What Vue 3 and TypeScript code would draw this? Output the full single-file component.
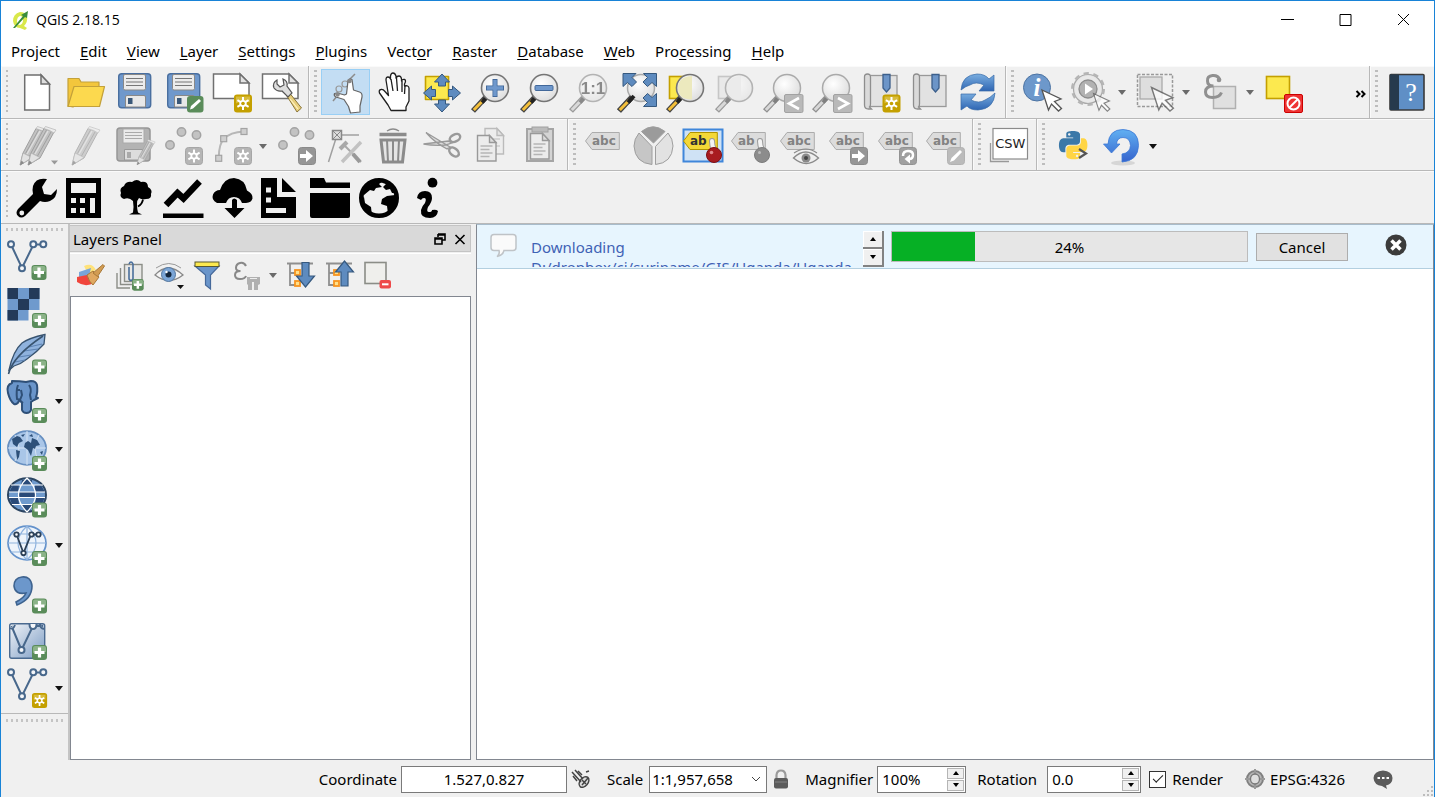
<script setup lang="ts">
import { ref } from 'vue'

interface Tool {
  icon: string
  label: string
  menu?: boolean
  active?: boolean
  dim?: boolean
}

interface Group {
  name: string
  tools: Tool[]
  overflow?: boolean
}

const menus: [string, string, string][] = [
  ['Pro', 'j', 'ect'],
  ['', 'E', 'dit'],
  ['', 'V', 'iew'],
  ['', 'L', 'ayer'],
  ['', 'S', 'ettings'],
  ['', 'P', 'lugins'],
  ['Vect', 'o', 'r'],
  ['', 'R', 'aster'],
  ['', 'D', 'atabase'],
  ['', 'W', 'eb'],
  ['Pro', 'c', 'essing'],
  ['', 'H', 'elp'],
]

const rows: Group[][] = [
  [
    {
      name: 'file',
      tools: [
        { icon: 'new', label: 'New project' },
        { icon: 'open', label: 'Open project' },
        { icon: 'save', label: 'Save project' },
        { icon: 'saveas', label: 'Save project as' },
        { icon: 'composer', label: 'New print composer' },
        { icon: 'manager', label: 'Composer manager' },
      ],
    },
    {
      name: 'nav',
      tools: [
        { icon: 'touch', label: 'Touch zoom and pan', active: true },
        { icon: 'pan', label: 'Pan map' },
        { icon: 'pansel', label: 'Pan map to selection' },
        { icon: 'zoomin', label: 'Zoom in' },
        { icon: 'zoomout', label: 'Zoom out' },
        { icon: 'zoomnative', label: 'Zoom to native resolution', dim: true },
        { icon: 'zoomfull', label: 'Zoom full' },
        { icon: 'zoomsel', label: 'Zoom to selection' },
        { icon: 'zoomsel', label: 'Zoom to layer', dim: true },
        { icon: 'zoomlast', label: 'Zoom last' },
        { icon: 'zoomnext', label: 'Zoom next' },
        { icon: 'newbookmark', label: 'New bookmark' },
        { icon: 'bookmark', label: 'Show bookmarks' },
        { icon: 'refresh', label: 'Refresh' },
      ],
    },
    {
      name: 'attributes',
      overflow: true,
      tools: [
        { icon: 'identify', label: 'Identify features' },
        { icon: 'action', label: 'Run feature action', menu: true },
        { icon: 'select', label: 'Select features', menu: true },
        { icon: 'selectexpr', label: 'Select by expression', menu: true },
        { icon: 'deselect', label: 'Deselect features' },
      ],
    },
    { name: 'help', tools: [{ icon: 'help', label: 'Help contents' }] },
  ],
  [
    {
      name: 'edit',
      tools: [
        { icon: 'pencils', label: 'Current edits' },
        { icon: 'pencil', label: 'Toggle editing' },
        { icon: 'saveedits', label: 'Save layer edits' },
        { icon: 'addpoint', label: 'Add feature' },
        { icon: 'addcurve', label: 'Add circular string', menu: true },
        { icon: 'movefeature', label: 'Move feature' },
        { icon: 'nodetool', label: 'Node tool' },
        { icon: 'trash', label: 'Delete selected' },
        { icon: 'cut', label: 'Cut features' },
        { icon: 'copy', label: 'Copy features' },
        { icon: 'paste', label: 'Paste features' },
      ],
    },
    {
      name: 'labels',
      tools: [
        { icon: 'label', label: 'Layer labeling options' },
        { icon: 'pie', label: 'Layer diagram options' },
        { icon: 'pinon', label: 'Highlight pinned labels' },
        { icon: 'pin', label: 'Pin or unpin labels' },
        { icon: 'labeleye', label: 'Show or hide labels' },
        { icon: 'labelmove', label: 'Move label' },
        { icon: 'labelrotate', label: 'Rotate label' },
        { icon: 'labeledit', label: 'Change label' },
      ],
    },
    { name: 'web', tools: [{ icon: 'csw', label: 'Metadata search' }] },
    {
      name: 'plugins',
      tools: [
        { icon: 'python', label: 'Python console' },
        { icon: 'reload', label: 'Reload plugin', menu: true },
      ],
    },
  ],
  [
    {
      name: 'extra',
      tools: [
        { icon: 'wrench', label: 'Settings' },
        { icon: 'calculator', label: 'Calculator' },
        { icon: 'tree', label: 'Land cover' },
        { icon: 'chart', label: 'Plot data' },
        { icon: 'cloud', label: 'Download data' },
        { icon: 'report', label: 'Reporting' },
        { icon: 'folder', label: 'Load data' },
        { icon: 'globe', label: 'Visualize' },
        { icon: 'info', label: 'About' },
      ],
    },
  ],
]

const layerTools: Tool[] = [
  { icon: 'addvector', label: 'Add vector layer' },
  { icon: 'addraster', label: 'Add raster layer' },
  { icon: 'addspatialite', label: 'Add SpatiaLite layer' },
  { icon: 'addpostgis', label: 'Add PostGIS layer', menu: true },
  { icon: 'addwms', label: 'Add WMS layer', menu: true },
  { icon: 'addwcs', label: 'Add WCS layer' },
  { icon: 'addwfs', label: 'Add WFS layer', menu: true },
  { icon: 'addtext', label: 'Add delimited text layer' },
  { icon: 'addvirtual', label: 'Add virtual layer' },
  { icon: 'newvector', label: 'New shapefile layer', menu: true },
]

const panelTools: Tool[] = [
  { icon: 'style', label: 'Open layer styling' },
  { icon: 'addgroup', label: 'Add group' },
  { icon: 'visibility', label: 'Manage visibility' },
  { icon: 'filter', label: 'Filter legend' },
  { icon: 'exprfilter', label: 'Filter by expression', menu: true },
  { icon: 'expand', label: 'Expand all' },
  { icon: 'collapse', label: 'Collapse all' },
  { icon: 'remove', label: 'Remove layer' },
]

const progress = ref(24)
const coordinate = ref('1.527,0.827')
const scale = ref('1:1,957,658')
const magnifier = ref('100%')
const rotation = ref('0.0')
const render = ref(true)
</script>

<template>
  <svg class="sprites" aria-hidden="true">
    <defs>
      <radialGradient id="lens" cx=".4" cy=".35" r=".7">
        <stop offset="0" stop-color="#fff" />
        <stop offset="1" stop-color="#dcdcdc" />
      </radialGradient>
      <linearGradient id="blue" x1="0" y1="0" x2="0" y2="1">
        <stop offset="0" stop-color="#7aaee0" />
        <stop offset="1" stop-color="#2f66b3" />
      </linearGradient>
      <linearGradient id="undo" x1="0" y1="0" x2="0" y2="1">
        <stop offset="0" stop-color="#61b0f2" />
        <stop offset="1" stop-color="#3563cd" />
      </linearGradient>
      <linearGradient id="sheet" x1="0" y1="0" x2="1" y2="1">
        <stop offset="0" stop-color="#f1f4f8" />
        <stop offset="1" stop-color="#7c9cc4" />
      </linearGradient>

      <!-- shared parts -->
      <g id="b-sun">
        <rect width="18" height="18" rx="3" fill="#c4a000" />
        <path d="M2 2h14v6q-7-3-14 1z" fill="#d8bc3c" />
        <g stroke="#fff" stroke-width="2">
          <path d="M9 2.500V15.500M3.400 5.700l11.200 6.600M3.400 12.300l11.200-6.600" />
        </g>
        <circle cx="9" cy="9" r="3.600" fill="#fff" />
        <circle cx="9" cy="9" r="1.800" fill="#c4a000" />
      </g>
      <g id="b-sun-grey">
        <rect x=".5" y=".5" width="17" height="17" rx="3" fill="#b5b5b5" stroke="#a6a6a6" />
        <path d="M9 2.500V15.500M3.400 5.700l11.200 6.600M3.400 12.300l11.200-6.600" stroke="#fff" stroke-width="2" />
        <circle cx="9" cy="9" r="3.600" fill="#fff" />
        <circle cx="9" cy="9" r="1.800" fill="#b5b5b5" />
      </g>
      <g id="b-plus">
        <rect width="15" height="15" rx="3" fill="#5a8c5a" />
        <path d="M1 3q0-2 2-2h9q2 0 2 2v4q-7-1-13 1z" fill="#8bb388" />
        <path d="M7.500 2.500v10M2.500 7.500h10" stroke="#fff" stroke-width="3.200" />
      </g>
      <g id="b-arrow">
        <rect x=".5" y=".5" width="17" height="17" rx="3" fill="#969696" stroke="#8a8a8a" />
        <path d="M2 7h6V3l7 6-7 6v-4H2z" fill="#fff" />
      </g>
      <g id="p-handle">
        <path d="M15 25 2 39" stroke="#444" stroke-width="5.500" />
        <path d="M12 28.500 2.800 38" stroke="#f5c03a" stroke-width="3" />
        <path d="M11 30.500 17 24" stroke="#222" stroke-width="4" />
      </g>
      <g id="p-handle-grey">
        <path d="M15 25 2 39" stroke="#909090" stroke-width="5.500" />
        <path d="M12 28.500 2.800 38" stroke="#d8d8d8" stroke-width="3" />
        <path d="M11 30.500 17 24" stroke="#808080" stroke-width="4" />
      </g>
      <g id="p-lens">
        <use href="#p-handle" />
        <circle cx="24" cy="16" r="13.500" fill="url(#lens)" stroke="#757575" stroke-width="1.600" />
      </g>
      <g id="p-lens-grey">
        <use href="#p-handle-grey" />
        <circle cx="24" cy="16" r="13.500" fill="url(#lens)" stroke="#aaa" stroke-width="1.500" />
      </g>
      <g id="p-cursor">
        <path d="M0 0 19 9 12.500 11.500 19.500 18.500 16.500 21 9.500 14 6.500 20z" fill="#fff" stroke="#555" stroke-width="1.300" />
      </g>
      <g id="p-floppy">
        <rect x="4.700" y="1.700" width="32" height="34" rx="3" fill="#6f98cc" stroke="#4a6f9f" stroke-width="1.400" />
        <rect x="9.500" y="2.500" width="22" height="15.500" rx="1.500" fill="#ececec" stroke="#888" />
        <path d="M12 6.500h17M12 10h17M12 13.500h17" stroke="#777" stroke-width="1.200" />
        <path d="M11.500 35V25q0-1.500 1.500-1.500h17q1.500 0 1.500 1.500v10z" fill="#e8e8e8" stroke="#888" />
        <rect x="14" y="26" width="4.500" height="6" fill="#3a5879" />
      </g>
      <g id="p-pencil">
        <path d="M3 26 16 1.500 26 5 12 31 0 38z" fill="#c2c2c2" stroke="#a0a0a0" />
        <path d="M7 27 20 4" stroke="#dedede" stroke-width="1.500" />
        <path d="M5.500 26.500 18.500 3M9.500 29 23 5" stroke="#a0a0a0" />
        <path d="M16 1.500 17.500-.5 28 3l-2 3q-4-3-10-4.500z" fill="#ececec" stroke="#b5b5b5" stroke-width=".7" />
        <path d="M3 26l9 4.500-8.500 5.500-2.500-2z" fill="#e2e2e2" stroke="#aaa" stroke-width=".7" />
        <path d="M1.500 33.500 0 38.500 4 36z" fill="#8a8a8a" />
      </g>
      <g id="p-tag">
        <path d="M1.500 15 8 6.500H35.300V23.500H8z" fill="#dcdcdc" stroke="#acacac" />
      </g>
      <g id="p-abc">
        <use href="#p-tag" />
        <text x="8" y="19" class="tag-text" fill="#828282">abc</text>
      </g>
      <g id="p-vector" fill="#f4f6f9" stroke="#48688c" stroke-width="2">
        <path d="M4 5.500 15 29 26.500 5.500H36" fill="none" />
        <circle cx="4" cy="5.300" r="3" />
        <circle cx="15" cy="29.300" r="3" />
        <circle cx="26.300" cy="5.300" r="3" />
        <circle cx="36.300" cy="5.300" r="3" />
      </g>
      <g id="p-points" fill="#c3c3c3" stroke="#a3a3a3" stroke-width="1.500">
        <circle cx="18.500" cy="6" r="4.200" />
        <circle cx="33.500" cy="9" r="4.200" />
        <circle cx="7" cy="19" r="4.200" />
      </g>
      <path id="p-out" d="M0 0H13L9 4 13.500 8.500 9 13 4.500 9 0 13z" fill="#5e8bbf" stroke="#36597f" />
      <path
        id="p-snake"
        d="M14.250.18l.9.2.73.26.59.3.45.32.34.34.25.34.16.33.1.3.04.26.02.2-.01.13V8.500l-.05.63-.13.55-.21.46-.26.38-.3.31-.33.25-.35.19-.35.14-.33.1-.3.07-.26.04-.21.02H8.770l-.69.05-.59.14-.5.22-.41.27-.33.32-.27.35-.2.36-.15.37-.1.35-.07.32-.04.27-.02.21v3.060H3.170l-.21-.03-.28-.07-.32-.12-.35-.18-.36-.26-.36-.36-.35-.46-.32-.59-.28-.73-.21-.88-.14-1.050-.05-1.230.06-1.220.16-1.040.24-.87.32-.71.36-.57.4-.44.42-.33.42-.24.4-.16.36-.1.32-.05.24-.01h.16l.06.01h8.160v-.83H6.180l-.01-2.750-.02-.37.05-.34.11-.31.17-.28.25-.26.31-.23.38-.2.44-.18.51-.15.58-.12.64-.1.71-.06.77-.04.84-.02 1.270.05zm-6.300 1.980l-.23.33-.08.41.08.41.23.34.33.22.41.09.41-.09.33-.22.23-.34.08-.41-.08-.41-.23-.33-.33-.22-.41-.09-.41.09z"
      />

      <!-- project -->
      <g id="new" fill="#fff" stroke="#6e6e6e" stroke-width="1.500">
        <path d="M8.700 3H25l8.500 9V38H8.700z" />
        <path d="M25 3v9h8.500z" fill="#ddd" />
      </g>
      <g id="open" fill="#fcd94e" stroke="#c3a13a" stroke-width="1.200" stroke-linejoin="round">
        <path d="M3 34V6.500h11l2 3.500h18v6L8 35z" fill="#f3c63c" />
        <path d="M9 14.500H39.500L34.500 34.500H3z" />
      </g>
      <g id="save"><use href="#p-floppy" /></g>
      <g id="saveas">
        <use href="#p-floppy" />
        <rect x="24" y="24" width="16.500" height="16.500" rx="3" fill="#5a8c5a" />
        <path d="M27 37.500 28 34 36 27 38 29 30 36.500z" fill="#fff" />
      </g>
      <g id="p-page" fill="#fff" stroke="#707070" stroke-width="1.500">
        <path d="M1.500 2H28l9 9V26.500H1.500z" />
        <path d="M28 2v9h9z" fill="#e2e2e2" />
      </g>
      <g id="composer">
        <use href="#p-page" />
        <use href="#b-sun" x="22" y="22.500" />
      </g>
      <g id="manager">
        <use href="#p-page" />
        <path d="M24 21 36 40l4.500-4L27 19z" fill="#e8cf7d" stroke="#8a7538" />
        <path d="M29 27l8 10" stroke="#fff3c4" stroke-width="1.200" />
        <path d="M16 8q-5 3-3 8 3 4 8 3l6 6 4-4-5-7q1-5-4-7l1 6-4 2-3-3z" fill="#ddd" stroke="#555" stroke-width="1.200" />
      </g>

      <!-- navigation -->
      <g id="touch" stroke-linejoin="round">
        <path d="M25 7l5-5M8 29l5-6" stroke="#8c8c8c" stroke-width="1.500" />
        <circle cx="20" cy="12" r="3" fill="none" stroke="#999" stroke-width="1.200" />
        <circle cx="14" cy="17" r="3" fill="none" stroke="#999" stroke-width="1.200" />
        <path d="M23 9q1-3 4-1.500L28.500 18l6 2q3 1 2.500 5l-2 9v6l-9.500 1-2-6.500-4.500-7-8-2.500q-2.500-1-1.500-3.500l3-.5 7 2 2-1z" fill="#fff" stroke="#666" stroke-width="1.200" />
        <circle cx="12.500" cy="22.500" r="2.300" fill="#888" />
        <circle cx="24.500" cy="9" r="2.300" fill="#888" />
      </g>
      <g id="pan" fill="#fff" stroke="#1e1e1e" stroke-width="1.300" stroke-linejoin="round">
        <path d="M17 38.500 14 33 5.500 21q-1-3 1.500-3.500 2-.5 4 2l3.500 4L12 8q0-3 2-3t2.500 2V4q.5-3 2.500-3t3 3v2q1-2 3-2t2.500 3v2q1-2 3-1.500T30.500 12v2q4-1 4.500 2v13l-3 6v3.500z" />
        <path d="M17 7l2 12M22.500 6l1 13M28 9v11M31 14l-.5 8" fill="none" />
      </g>
      <g id="pansel" fill="#5e8bbf" stroke="#36597f" stroke-linejoin="round">
        <rect x="3.500" y="4.500" width="23" height="23" fill="#fce94f" stroke="#c4a000" stroke-width="1.600" />
        <path d="M20 2l7.500 8H23.500v4h-7v-4h-4zM20 40l7.500-8H23.500v-4h-7v4h-4zM1.500 21l8-7v3.500h4v7h-4V28zM38.500 21l-8-7v3.500h-4v7h4V28z" />
      </g>
      <g id="zoomin">
        <use href="#p-lens" />
        <path d="M24 7v18M15 16h18" stroke="#42689a" stroke-width="5" />
        <path d="M24 8v16M16 16h16" stroke="#6f98cc" stroke-width="3.500" />
      </g>
      <g id="zoomout">
        <use href="#p-lens" />
        <rect x="15" y="13.500" width="18" height="5" rx="1" fill="#6f98cc" stroke="#42689a" />
      </g>
      <g id="zoomnative">
        <use href="#p-lens" />
        <text x="24" y="22" class="one-text" fill="#222" text-anchor="middle">1:1</text>
      </g>
      <g id="zoomfull">
        <use href="#p-lens-grey" />
        <use href="#p-handle" />
        <use href="#p-out" x="6" y="1.500" />
        <use href="#p-out" transform="matrix(-1 0 0 1 39.500 1.500)" />
        <use href="#p-out" transform="matrix(-1 0 0 -1 39.500 34.500)" />
      </g>
      <g id="zoomsel">
        <rect x="3.500" y="4.500" width="22" height="22" fill="#fce94f" stroke="#c4a000" stroke-width="1.600" />
        <use href="#p-lens" />
        <path d="M26 4v23.500q-14 0-14-11.500T26 4z" fill="#ece9be" />
      </g>
      <g id="p-navbadge">
        <rect x="21.500" y="22.500" width="18.500" height="18" rx="1.500" fill="#b9b9b9" stroke="#a2a2a2" />
      </g>
      <g id="zoomlast">
        <use href="#p-lens-grey" />
        <use href="#p-navbadge" />
        <path d="M36 26l-10 5.500 10 5.500" fill="none" stroke="#fff" stroke-width="2.600" />
      </g>
      <g id="zoomnext">
        <use href="#p-lens-grey" />
        <use href="#p-navbadge" />
        <path d="M26 26l10 5.500-10 5.500" fill="none" stroke="#fff" stroke-width="2.600" />
      </g>
      <g id="bookmark">
        <rect x="9" y="3.500" width="27" height="31" fill="#e2e2e2" stroke="#999" stroke-width="1.300" />
        <path d="M9.500 32V5q0-3-3-3t-3 3v28q0 4 4 4h3l-2-2q1-1 1-3z" fill="#dadada" stroke="#8e8e8e" stroke-width="1.300" />
        <path d="M22 2.500h7V16l-3.500 4L22 16z" fill="#6c95c8" stroke="#3c5f8b" stroke-width="1.300" />
      </g>
      <g id="newbookmark">
        <use href="#bookmark" />
        <use href="#b-sun" x="21.500" y="22.500" />
      </g>
      <g id="refresh">
        <path d="M3 18Q4 3 19 2q8 0 12 5l5-4v16H21l5-6q-8-4-14 0-4 1-9 5z" fill="url(#blue)" stroke="#3a6ba8" stroke-width=".7" />
        <path d="M37 21q-1 16-17 17-8 0-11-4l-6 4V22h15l-5 6q8 4 14 0 5-2 10-7z" fill="url(#blue)" stroke="#3a6ba8" stroke-width=".7" />
      </g>

      <!-- attributes -->
      <g id="identify">
        <circle cx="15" cy="15.500" r="13.500" fill="#6d98cb" stroke="#4c73a2" />
        <text x="15" y="24" class="i-text" fill="#fff" text-anchor="middle">i</text>
        <use href="#p-cursor" x="20" y="18" />
      </g>
      <g id="action">
        <circle cx="17" cy="17" r="14.500" fill="#e5e5e5" stroke="#a9a9a9" stroke-width="1.200" />
        <circle cx="17" cy="17" r="15.800" fill="none" stroke="#b5b5b5" stroke-width="2.400" stroke-dasharray="5.300 4.630" />
        <circle cx="17" cy="17" r="13" fill="#e9e9e9" />
        <circle cx="17" cy="17" r="9" fill="#b2b2b2" stroke="#8d8d8d" stroke-width="1.300" />
        <path d="M14 11.500 22 17l-8 5.500z" fill="#fff" />
        <use href="#p-cursor" transform="translate(22.500 21.500) scale(.84)" opacity=".7" />
      </g>
      <g id="select">
        <rect x="2.500" y="2.500" width="35" height="32" fill="none" stroke="#999" stroke-width="1.500" stroke-dasharray="3 1.500" />
        <rect x="5" y="5" width="22" height="22" fill="#dedede" stroke="#aaa" stroke-width="1.300" />
        <use href="#p-cursor" transform="translate(16.500 15.500) scale(1.120)" opacity=".75" />
      </g>
      <g id="selectexpr">
        <rect x="14.500" y="14.500" width="22" height="22" fill="#e0e0e0" stroke="#b0b0b0" stroke-width="1.500" />
        <path d="M21 8q-2-5-7.500-4.500T8.500 9q0 5 6 5-8 0-8 6 0 5.500 7 5.500t9-5" fill="none" stroke="#909090" stroke-width="3" />
        <circle cx="20" cy="8" r="2.300" fill="#909090" />
      </g>
      <g id="deselect">
        <rect x="3.500" y="4.500" width="23" height="22" fill="#fce94f" stroke="#c4a000" stroke-width="1.600" />
        <rect x="21.500" y="22.500" width="18" height="18" rx="1.500" fill="#e33" stroke="#c00" />
        <circle cx="30.500" cy="31.500" r="6" fill="none" stroke="#fff" stroke-width="2" />
        <path d="M26.500 35.500l8-8" stroke="#fff" stroke-width="2" />
      </g>
      <g id="help">
        <rect x="4" y="2.500" width="34" height="35.500" rx="1" fill="#5f8fc6" stroke="#3a3a3a" stroke-width="1.600" />
        <path d="M4 2.500h9V38H4z" fill="#263a4d" />
        <text x="25" y="29" class="q-text" fill="#fff" text-anchor="middle">?</text>
      </g>

      <!-- digitizing -->
      <g id="pencil"><use href="#p-pencil" x="7" y="1" opacity=".75" /></g>
      <g id="pencils">
        <use href="#p-pencil" x="4" y="1" />
        <use href="#p-pencil" x="12" y="1" />
        <path d="M35 34.500h7l-3.500 4z" fill="#999" />
      </g>
      <g id="saveedits">
        <rect x="3" y="2" width="33" height="33" rx="3" fill="#b3b3b3" stroke="#969696" stroke-width="1.500" />
        <rect x="9" y="3" width="21" height="14" fill="#eaeaea" stroke="#aaa" />
        <path d="M11 6.500h17M11 9.500h17M11 12.500h17" stroke="#aaa" />
        <path d="M10.500 34V23.500h18V34z" fill="#ddd" stroke="#999" />
        <rect x="13" y="26" width="4" height="6" fill="#aaa" />
        <use href="#p-pencil" transform="translate(23 14) scale(.65)" />
      </g>
      <g id="addpoint"><use href="#p-points" /><use href="#b-sun-grey" x="22" y="21" /></g>
      <g id="addcurve">
        <path d="M6.700 32Q7 17 12 13 18 6 32 5.500" fill="none" stroke="#b7b7b7" stroke-width="2" />
        <g fill="#cfcfcf" stroke="#a3a3a3" stroke-width="1.200">
          <rect x="29" y="2.500" width="6" height="6" />
          <rect x="8.700" y="9.700" width="6" height="6" />
          <rect x="3.700" y="29.300" width="6" height="6" />
        </g>
        <use href="#b-sun-grey" x="22" y="21" />
      </g>
      <g id="movefeature"><use href="#p-points" /><use href="#b-arrow" x="22" y="21" /></g>
      <g id="nodetool" fill="none" stroke="#a0a0a0" stroke-width="1.500">
        <path d="M35 9H13L4.500 36" />
        <rect x="8.500" y="4.500" width="9" height="9" fill="#ddd" stroke="#888" />
        <path d="M8.500 4.500l9 9m0-9l-9 9" stroke="#888" stroke-width="1" />
        <path d="M20 19l17 17" stroke="#a8a8a8" stroke-width="2" />
        <path d="M29 28l7 8" stroke="#999" stroke-width="4" />
        <path d="M37 16 18 36" stroke="#c2c2c2" stroke-width="3.500" />
        <path d="M16 23l7-7" stroke="#a8a8a8" stroke-width="4" />
      </g>
      <g id="trash" fill="none" stroke="#8b8b8b">
        <path d="M14 5q6-4 12 0" stroke-width="1.500" />
        <path d="M6.500 8.500h27" stroke-width="3.500" />
        <path d="M8 14h24l-2.500 22h-19z" stroke-width="3" fill="#e5e5e5" />
        <path d="M14 14l1 22M20 14v22M26 14l-1 22" stroke-width="2" />
      </g>
      <g id="cut" fill="none" stroke="#9a9a9a" stroke-width="1.300">
        <path d="M4 6.500 28 21l-3 2Q12 16 4 6.500zM1.500 18l25-3 3 2-6 2Q12 20 1.500 18z" fill="#dcdcdc" />
        <ellipse cx="33" cy="12" rx="5.500" ry="3.500" stroke-width="2.500" transform="rotate(-25 33 12)" />
        <ellipse cx="32" cy="26" rx="5.500" ry="3.500" stroke-width="2.500" transform="rotate(40 32 26)" />
      </g>
      <g id="p-sheetgrey" fill="#ececec" stroke="#999" stroke-width="1.400">
        <path d="M0 0H12L18.500 7V25.500H0z" />
        <path d="M12 0V7h6.500z" fill="#ddd" />
        <path d="M3 10.500h12M3 14h9M3 17.500h12M3 21h9" stroke="#b5b5b5" fill="none" />
      </g>
      <g id="copy">
        <use href="#p-sheetgrey" x="14" y="2.500" opacity=".6" />
        <use href="#p-sheetgrey" x="6.500" y="9.500" />
      </g>
      <g id="paste">
        <rect x="7" y="3" width="26" height="32" fill="#d4d4d4" stroke="#a5a5a5" stroke-width="2" />
        <rect x="12" y="1" width="16" height="5" fill="#bbb" stroke="#a0a0a0" />
        <use href="#p-sheetgrey" transform="translate(10.500 7.500)" />
      </g>

      <!-- labels -->
      <g id="label"><use href="#p-abc" /></g>
      <g id="pie" stroke="#9e9e9e" stroke-width="1">
        <path d="M20.500 17 8.500 5.500Q20-4 32 5.500z" fill="#9b9b9b" />
        <path d="M19 20.500v18Q2 37 1 20 1 13 6 7z" fill="#c6c6c6" />
        <path d="M22.500 20.500v18Q39 37 40 20q0-7-5-13z" fill="#e2e2e2" />
      </g>
      <g id="p-pin">
        <path d="M30 15q0 5 2 9" stroke="#999" stroke-width="6" stroke-linecap="round" fill="none" />
        <path d="M30 15q0 5 2 9" stroke="#f4f4f4" stroke-width="4" stroke-linecap="round" fill="none" />
      </g>
      <g id="pinon">
        <rect x="1.500" y="3.500" width="39" height="32" fill="#cfe2f5" stroke="#3f86da" stroke-width="2" />
        <path d="M1.500 15 8 6.500H35.300V23.500H8z" fill="#f4d836" stroke="#b09400" />
        <text x="8" y="19" class="tag-text" fill="#333">ab</text>
        <use href="#p-pin" />
        <circle cx="32" cy="29" r="7.500" fill="#a81c20" stroke="#7c1014" />
        <circle cx="29.500" cy="26.500" r="1.800" fill="#e0898c" />
      </g>
      <g id="pin">
        <use href="#p-tag" />
        <text x="8" y="19" class="tag-text" fill="#828282">ab</text>
        <use href="#p-pin" />
        <circle cx="32" cy="29" r="7.500" fill="#8c8c8c" stroke="#7c7c7c" />
        <circle cx="29.500" cy="26.500" r="1.500" fill="#bbb" />
      </g>
      <g id="labeleye">
        <use href="#p-abc" />
        <path d="M14.500 32q12-12 25 0-12 11-25 0z" fill="#eee" stroke="#8a8a8a" stroke-width="1.400" />
        <path d="M15 27q12-8 23 0" fill="none" stroke="#8a8a8a" stroke-width="1.200" />
        <circle cx="27" cy="32" r="4.500" fill="#8a8a8a" />
        <circle cx="27" cy="32" r="2" fill="#444" />
      </g>
      <g id="labelmove"><use href="#p-abc" /><use href="#b-arrow" x="22" y="21" /></g>
      <g id="labelrotate">
        <use href="#p-abc" />
        <rect x="22.500" y="21.500" width="17" height="17" rx="3" fill="#a0a0a0" stroke="#929292" />
        <path d="M26 30q0-5 5-5t5 4q0 4-4 4" fill="none" stroke="#fff" stroke-width="2.500" />
        <path d="M33 28.500v9L27.500 33z" fill="#fff" />
      </g>
      <g id="labeledit">
        <use href="#p-abc" />
        <rect x="22.500" y="21.500" width="17" height="17" rx="3" fill="#bbb" stroke="#b2b2b2" />
        <path d="M25 36 26.500 32 35 24l2 2-8 8.500z" fill="#fff" />
      </g>

      <!-- plugins -->
      <g id="csw">
        <path d="M1.500 17v18.500H20" fill="none" stroke="#999" stroke-width="1.300" />
        <rect x="4" y="2.500" width="34.500" height="30.500" fill="#fff" stroke="#8a8a8a" stroke-width="1.200" />
        <text x="21.300" y="22" class="csw-text" fill="#222" text-anchor="middle">CSW</text>
      </g>
      <g id="python">
        <g transform="translate(6 5) scale(1.180)">
          <use href="#p-snake" fill="#3b78a8" />
          <use href="#p-snake" fill="#ffd545" transform="rotate(180 12 12)" />
        </g>
        <path d="M26 23l7 4.500-7 4.500" fill="none" stroke="#555" stroke-width="2.200" />
      </g>
      <g id="reload">
        <ellipse cx="21" cy="37" rx="12" ry="2.500" fill="#bbb" opacity=".5" />
        <path d="M1.500 18H6Q7 3.500 21 3.500 36.500 4 36.500 19.500 36 35 20 36V28q8-1 8.500-8.500-.5-8-7.500-8-6 0-6.500 6.500H18L9.500 27z" fill="url(#undo)" stroke="#3c79d6" stroke-width=".8" />
      </g>

      <!-- third row -->
      <g id="wrench">
        <path d="M31 1Q20-1 17 8q-1 4 0 8L2 31q-3 4 0 7t7 0l15-15q5 2 10 0 7-3 7-12l-6 6-7-1-2-7z" />
        <circle cx="5.800" cy="35" r="2.400" fill="#f0f0f0" />
      </g>
      <g id="calculator">
        <path d="M1 0H36V40H1z" />
        <path d="M6 5H31V15H6zM6 20h5v5H6zM15 20h5v5H15zM25 20h5V35h-5zM6 30h5v5H6zM15 30h5v5H15z" fill="#f0f0f0" />
      </g>
      <g id="tree">
        <path d="M19 23Q15 19 10 21 5 19 7 15 5 10 10 8q2-5 8-4 5-4 9 0 7-1 7 5 5 3 3 7 1 5-5 5-4 1-7-1-2 2-2 6 0 5 1 8.500l4 2H15l4-2q1-6 0-11.500z" />
        <path d="M24 28.500q4-2 5-7" fill="none" stroke="#000" stroke-width="1.800" />
      </g>
      <g id="chart">
        <path d="M3 27 14.500 15l6 5.500L36.500 3.500" fill="none" stroke="#000" stroke-width="6.500" />
        <path d="M0 35.500H40.500V40H0z" />
      </g>
      <g id="cloud">
        <path d="M14 25H5q-6-3-4-8.500 2-4.500 7-4.500Q12 0 22 0q11 1 13 12.500 6 3 5.500 8-1 4-6.500 4.500H30q-2-6-8-6t-8 6z" />
        <path d="M20 22q2-3 5 0v8h7.500L22.500 40 12.500 30H20z" />
      </g>
      <g id="report">
        <path d="M0 0H16V19H35V40H0zM21 0 35 14H21z" />
        <path d="M5 9.500h5v5H5zM5 19.500h5v5H5zM5 30H25v5H5z" fill="#f0f0f0" />
      </g>
      <g id="folder">
        <path d="M0 0H14L16 4.500H40V10H0zM0 15H40V38q0 2-2 2H2q-2 0-2-2z" />
      </g>
      <g id="globe">
        <circle cx="20" cy="20" r="17.700" fill="#f0f0f0" stroke="#000" stroke-width="4.600" />
        <path d="M2 21 5 19 6 25 12 29 13 38 4 32zM5 13q4-7 12-9l7-1-4 3 3 3-6 1-2 3-4-1-6 5zM27 6l4-2 6 11h-4l-2-4-4 1-3-3zM28 18l8-1 3 4-3 9-7 6-1-8-6-2 1-5z" />
      </g>
      <g id="info">
        <circle cx="24.500" cy="4.700" r="4.900" />
        <path d="M9 20q1-7 8-7t7 7q0 4-4 9-2 5 1 5 3 0 3-2 4-1 6 1-1 7-8 7-10 0-9-8 1-4 4-7 2-5-1-5-2 0-3 2z" />
      </g>

      <!-- data sources -->
      <g id="addvector">
        <use href="#p-vector" />
        <use href="#b-plus" x="24.500" y="26" />
      </g>
      <g id="addraster">
        <path d="M.500 1h32v22h-11v10.500h-21z" fill="#6f9acd" />
        <path d="M.500 1h10.500v11H.500zM22 1h10.500v11H22zM11 12h11v11H11zM.500 23h10.500v10.500H.500z" fill="#233a59" />
        <use href="#b-plus" x="25" y="26" />
      </g>
      <g id="addspatialite">
        <path d="M2 36Q6 17 15 9 22 4 38 .500L37 10Q30 18 20 25q-6 5-13 7z" fill="#8fb2dd" stroke="#38536f" stroke-width="1.300" />
        <path d="M8 28l10-2M12 23l12-2M17 17l14-2M22 13l13-3" fill="none" stroke="#5d83b3" stroke-width="1.200" />
        <path d="M1.500 40Q6 22 36 2" fill="none" stroke="#38536f" stroke-width="1.600" />
        <use href="#b-plus" x="25" y="25.500" />
      </g>
      <g id="addpostgis">
        <path d="M5 1q-6 2-4 10t6 11q3 1 5-3l1-1 2 3v7q1 3 4.500 3t4.500-3v-8l3-2 4-2-2-1q2-5 1-12-1-4-6-4l-5 1q-6-1-14-1z" fill="#6a95ca" stroke="#2f5078" stroke-width="2" stroke-linejoin="round" />
        <path d="M11 3q-2 5-1 14l3 1 2-5-1-5M22 3q3 4 1 10l1 5M12 18l4 3M10 8h3" fill="none" stroke="#2f5078" stroke-width="2" />
        <use href="#b-plus" x="25" y="26" />
      </g>
      <g id="addwms">
        <ellipse cx="20" cy="18" rx="19" ry="16.800" fill="#a9c6e8" stroke="#668fc0" stroke-width="1.800" />
        <path d="M1 18h38M20 1v34M8 5q8 13 0 26M32 5q-8 13 0 26" fill="none" stroke="#d5e3f3" />
        <path d="M5 9l5-3 3 1 3 4-4 2-2 4-4-3zM9 20l4 1-1 6-2 3zM18 13l3-2 3 2 1-5 5 2 3 5-4 1-1 3-2-1-2 8-3-6-4-3zM14 5l4-1-2 3zM22 6l3-2 1 3zM33 22l3-1-1 4z" fill="#2d5079" />
        <use href="#b-plus" x="25" y="26" />
      </g>
      <g id="addwcs">
        <ellipse cx="20" cy="18" rx="19" ry="16.800" fill="#6f9acd" stroke="#2c4562" stroke-width="2" />
        <path d="M6 8h28l4 7H2zM2 20h36l-3 7H5z" fill="#2a4a78" />
        <path d="M12 8h16v7H11zM11 20h18l-1 7H12z" fill="#6f9acd" />
        <path d="M12 15h16v5H12zM15 3h10v5H14zM14 27.500h12l-3 6h-5z" fill="#2a4a78" />
        <path d="M4 8h32M2 15h36M2 20.500h36M5 27.500h30M20 1Q3 18 20 35 37 18 20 1z" fill="none" stroke="#fff" stroke-width="1.200" />
        <use href="#b-plus" x="25" y="25.500" />
      </g>
      <g id="addwfs">
        <ellipse cx="20" cy="18" rx="19" ry="16.800" fill="#eef4fb" stroke="#6492cb" stroke-width="1.700" />
        <path d="M4 9h32M1 18h38M4 27h32M20 1v34M20 1Q2 18 20 35 38 18 20 1z" fill="none" stroke="#8fb3de" stroke-width="1.200" />
        <g fill="#fff" stroke="#2c4057" stroke-width="1.800">
          <path d="M9.500 9.500 16.500 28 24 9.500h7.500" fill="none" />
          <circle cx="9.500" cy="9.500" r="2.200" />
          <circle cx="16.500" cy="28" r="2.200" />
          <circle cx="24.500" cy="9.500" r="2.200" />
          <circle cx="31.500" cy="9.500" r="2.200" />
        </g>
        <use href="#b-plus" x="25" y="26" />
      </g>
      <g id="addtext">
        <path d="M15 4Q24 3 25 13 25 26 10 32L9 29Q17 25 19 20 8 22 7 13 7 5 15 4z" fill="#6c97cb" stroke="#3e638f" stroke-width="1.600" />
        <use href="#b-plus" x="25" y="25.500" />
      </g>
      <g id="addvirtual">
        <rect x="2.700" y="3.700" width="35" height="34.500" rx="2" fill="url(#sheet)" stroke="#4a6a90" stroke-width="1.400" />
        <g fill="#f4f6f9" stroke="#48688c" stroke-width="2">
          <path d="M4.500 6 14.500 30 26 6H36" fill="none" />
          <circle cx="14.500" cy="30" r="3" />
          <path d="M3 8q3 2 5-3M22.500 4q0 5 3.500 5t3.500-5M33 4q0 4 4 5" />
        </g>
        <use href="#b-plus" x="25" y="25" />
      </g>
      <g id="newvector">
        <use href="#p-vector" y="-1" />
        <use href="#b-sun" transform="translate(25 25) scale(.84)" />
      </g>

      <!-- layers panel, 30px grid -->
      <g id="style">
        <path d="M8 6q8-4 12 4l-8 4z" fill="#ffe27a" />
        <path d="M3 12l12-4-2 8-10 1z" fill="#78a5d8" />
        <path d="M1 17l10-2 5 9Q8 27 1 22z" fill="#f0453c" />
        <path d="M11 15l6-4 6 6-6 8q-4-3-6-10z" fill="#e0a860" stroke="#a87838" />
        <path d="M17 13 27 4.500l1.500 1.500-7 10.500z" fill="#d29c52" stroke="#a87838" />
      </g>
      <g id="addgroup" fill="none" stroke="#8b8d87" stroke-width="1.400">
        <path d="M2 13v15h13M5.500 8v16.500h13" />
        <rect x="9.500" y="4.500" width="17.500" height="17" fill="#e8e8e6" />
        <path d="M14 7V19q2 3 4 0V4q-2-4-4 0" stroke="#4a6f9c" stroke-width="1.600" />
        <use href="#b-plus" transform="translate(17 19) scale(.78)" stroke="none" />
      </g>
      <g id="visibility">
        <path d="M1 15Q14 1 29 15 15 26 1 15z" fill="#f5f5f5" stroke="#888" stroke-width="1.300" />
        <path d="M2 8Q15-1 27 8" fill="none" stroke="#999" />
        <circle cx="14.500" cy="14.500" r="7" fill="#7ba5d6" stroke="#53779f" />
        <circle cx="14.500" cy="14.500" r="3" fill="#14263c" />
        <circle cx="12.500" cy="12" r="1.200" fill="#fff" />
        <path d="M23 25h7l-3.500 4z" fill="#111" />
      </g>
      <g id="filter">
        <path d="M2 6h24l-8.500 9v14l-5-4V15z" fill="#6a95ca" stroke="#46699a" stroke-width="1.200" />
        <rect x="2" y="2" width="24" height="4.500" fill="#fce94f" stroke="#585830" />
      </g>
      <g id="exprfilter">
        <path d="M14 6Q12 2 8 3T4 8q0 3 4.500 3Q3 11 3 15q0 4 5 4t6-3" fill="none" stroke="#888" stroke-width="2" />
        <path d="M15 17h13v7l-2 1v5h-4v-8h-2v8h-4v-5l-1-1z" fill="#b0b0b0" />
        <path d="M18 18.500h7" stroke="#eee" />
      </g>
      <g id="p-treelist" fill="none" stroke="#8f8f8f" stroke-width="1.800">
        <path d="M1 3.500h26M4 4v22M4 13h6M4 25h6" />
        <rect x="9" y="10" width="5" height="5" fill="#ffe08a" stroke="#f79420" />
        <rect x="9" y="21" width="5" height="5" fill="#ffe08a" stroke="#f79420" />
      </g>
      <g id="expand">
        <use href="#p-treelist" />
        <path d="M16 2.500h7V16h5.500L19.500 27 10.500 16H16z" fill="#5e8bbf" stroke="#36597f" stroke-width="1.200" />
      </g>
      <g id="collapse">
        <use href="#p-treelist" />
        <path d="M16 26h7V12h5.500L19.500 1 10.500 12H16z" fill="#5e8bbf" stroke="#36597f" stroke-width="1.200" />
      </g>
      <g id="remove">
        <rect x="1" y="2.500" width="21" height="21" fill="#efefec" stroke="#8b8d87" stroke-width="1.600" />
        <rect x="15.500" y="20" width="11.500" height="8.500" rx="2" fill="#ee4a4a" />
        <path d="M18 24.300h6.500" stroke="#fff" stroke-width="2" />
      </g>
    </defs>
  </svg>

  <div class="window">
    <header class="titlebar">
      <svg class="logo" viewBox="0 0 18 20" aria-hidden="true">
        <path d="M8 2Q1 4 1 11q1 7 7 7l5 2 2-2-3-2q4-4 3-10-2-4-7-4z" fill="#d9e84a" />
        <path d="M8 6q-3 1-3 5t3 4q3-1 3-5T8 6z" fill="#fff" />
        <path d="M1 18 11 6 9 5 16 1l-1 7-2-1L3 18z" fill="#3a8c3c" />
      </svg>
      <span class="title">QGIS 2.18.15</span>
      <div class="controls">
        <button type="button" aria-label="Minimize">
          <svg viewBox="0 0 13 13"><path d="M0 6.500h13" /></svg>
        </button>
        <button type="button" aria-label="Maximize">
          <svg viewBox="0 0 13 13"><path d="M1 1.500h11v11H1z" /></svg>
        </button>
        <button type="button" aria-label="Close">
          <svg viewBox="0 0 13 13"><path d="M1 1l11 11M12 1 1 12" /></svg>
        </button>
      </div>
    </header>

    <nav class="menubar">
      <button v-for="[a, key, b] in menus" :key="a + key + b" type="button">{{ a }}<u>{{ key }}</u>{{ b }}</button>
    </nav>

    <div v-for="(row, r) in rows" :key="r" class="row" :class="`row-${r + 1}`">
      <div v-for="g in row" :key="g.name" class="group" :class="g.name" role="toolbar" :aria-label="g.name">
        <span class="grip"></span>
        <button
          v-for="t in g.tools"
          :key="t.label"
          type="button"
          class="tool"
          :class="{ menu: t.menu, active: t.active }"
          :aria-label="t.label"
        >
          <svg class="icon" :class="{ dim: t.dim }" viewBox="0 0 40 40"><use :href="`#${t.icon}`" /></svg>
          <i v-if="t.menu" class="caret"></i>
        </button>
        <button v-if="g.overflow" type="button" class="more" aria-label="More tools">
          <svg viewBox="0 0 10 8"><path d="M1 1l3 3-3 3M6 1l3 3-3 3" /></svg>
        </button>
      </div>
    </div>

    <main class="body">
      <aside class="side">
        <span class="grip-h"></span>
        <div class="side-tools" role="toolbar" aria-label="Manage layers">
          <button v-for="t in layerTools" :key="t.label" type="button" class="side-tool" :aria-label="t.label">
            <svg class="icon" viewBox="0 0 40 40"><use :href="`#${t.icon}`" /></svg>
            <i v-if="t.menu" class="caret"></i>
          </button>
        </div>
        <div class="side-rest"><span class="grip-h"></span></div>
      </aside>

      <section class="panel">
        <div class="panel-title">
          <h2>Layers Panel</h2>
          <button type="button" aria-label="Float panel">
            <svg viewBox="0 0 12 12"><path d="M4 1h7v6H8M4 1v3M4 2h7M1 5h7v6H1zM1 6h7" /></svg>
          </button>
          <button type="button" aria-label="Close panel">
            <svg viewBox="0 0 12 12"><path d="M1.500 2l9 9M10.500 2l-9 9" /></svg>
          </button>
        </div>
        <div class="panel-tools" role="toolbar" aria-label="Layers">
          <button v-for="t in panelTools" :key="t.label" type="button" :class="{ menu: t.menu }" :aria-label="t.label">
            <svg class="icon-s" viewBox="0 0 30 30"><use :href="`#${t.icon}`" /></svg>
            <i v-if="t.menu" class="caret"></i>
          </button>
        </div>
        <div class="tree"></div>
      </section>

      <section class="canvas">
        <div class="message">
          <svg class="bubble" viewBox="0 0 28 26" aria-hidden="true">
            <path d="M4 1.500h19q3 0 3 3v10q0 3-3 3H14q-1 5-7 6 3-2 2-6H4q-3 0-3-3v-10q0-3 3-3z" fill="#fafafa" stroke="#bfc3c7" stroke-width="1.500" />
          </svg>
          <div class="message-text">
            <p>Downloading D:/dropbox/ci/suriname/GIS/Uganda/Uganda</p>
          </div>
          <div class="scroller">
            <button type="button" aria-label="Scroll up"><i class="up"></i></button>
            <button type="button" aria-label="Scroll down"><i class="down"></i></button>
          </div>
          <div class="progress" role="progressbar" :aria-valuenow="progress" aria-valuemin="0" aria-valuemax="100">
            <div class="chunk" :style="{ width: progress - 0.5 + '%' }"></div>
            <span>{{ progress }}%</span>
          </div>
          <button type="button" class="cancel">Cancel</button>
          <button type="button" class="dismiss" aria-label="Dismiss">
            <svg viewBox="0 0 22 22">
              <circle cx="11" cy="11" r="10.500" fill="#3b3b3b" />
              <path d="M6.500 6.500l9 9M15.500 6.500l-9 9" stroke="#fff" stroke-width="3.500" />
            </svg>
          </button>
        </div>
      </section>
    </main>

    <footer class="status">
      <label for="coordinate">Coordinate</label>
      <input id="coordinate" v-model="coordinate" class="coordinate" type="text" />
      <button type="button" class="mouse" aria-label="Toggle extents and mouse position">
        <svg viewBox="0 0 20 20">
          <ellipse cx="13" cy="13" rx="4" ry="6" fill="#ddd" stroke="#444" stroke-width="1.400" transform="rotate(40 13 13)" />
          <path d="M1 3l9 10M4 1l8 9M2 7l4 5M7 2l4 4M15 3l3-1M11 16l6-7M11 11l4 4" stroke="#444" stroke-width="1.500" fill="none" />
        </svg>
      </button>
      <label for="scale">Scale</label>
      <span class="combo">
        <select id="scale" v-model="scale"><option>1:1,957,658</option></select>
        <svg viewBox="0 0 10 6" aria-hidden="true"><path d="M1 1l4 4 4-4" /></svg>
      </span>
      <button type="button" class="lock" aria-label="Lock scale">
        <svg viewBox="0 0 16 20">
          <path d="M3.500 10V6Q4 1.500 8 1.500T12.500 6v4" fill="none" stroke="#9b9b9b" stroke-width="2.200" />
          <rect x="1" y="9" width="14" height="10.500" rx="2" fill="#5c5c5c" />
          <path d="M2 13h12" stroke="#858585" />
        </svg>
      </button>
      <label for="magnifier">Magnifier</label>
      <span class="spin magnifier">
        <input id="magnifier" v-model="magnifier" type="text" />
        <span class="steps">
          <button type="button" aria-label="Increase magnifier"><i class="up"></i></button>
          <button type="button" aria-label="Decrease magnifier"><i class="down"></i></button>
        </span>
      </span>
      <label for="rotation">Rotation</label>
      <span class="spin rotation">
        <input id="rotation" v-model="rotation" type="text" />
        <span class="steps">
          <button type="button" aria-label="Increase rotation"><i class="up"></i></button>
          <button type="button" aria-label="Decrease rotation"><i class="down"></i></button>
        </span>
      </span>
      <label class="render"><input v-model="render" type="checkbox" />Render</label>
      <button type="button" class="crs">
        <svg viewBox="0 0 20 20" aria-hidden="true">
          <circle cx="10" cy="10" r="8" fill="#b5b5b5" stroke="#808080" stroke-width="2" />
          <path d="M10 0v20M0 10h20" stroke="#999" stroke-width="2" />
          <ellipse cx="10" cy="10" rx="4.500" ry="5" fill="#dedede" stroke="#777" stroke-width="1.300" />
        </svg>
        EPSG:4326
      </button>
      <button type="button" class="log" aria-label="Messages">
        <svg viewBox="0 0 20 20">
          <path d="M10 1.500Q19 2 19.500 9q0 6-6.500 7.500L14 20l-5-3Q1 16 .500 9 1 2 10 1.500z" fill="#5b5b5b" />
          <path d="M4.500 9h2.500M9 9h2.500M13.500 9H16" stroke="#fff" stroke-width="2.200" />
        </svg>
      </button>
      <svg class="sizegrip" viewBox="0 0 12 12" aria-hidden="true">
        <path d="M9 1h2v2H9zM5 5h2v2H5zM9 5h2v2H9zM1 9h2v2H1zM5 9h2v2H5zM9 9h2v2H9z" fill="#bdbdbd" />
      </svg>
    </footer>
  </div>
</template>

<style>
body {
  margin: 0;
  background: #f0f0f0;
}
</style>

<style scoped>
.sprites {
  position: absolute;
  width: 0;
  height: 0;
}

.window {
  box-sizing: border-box;
  display: flex;
  flex-direction: column;
  min-height: 100vh;
  border: 1px solid #1883d7;
  border-bottom: 0;
  background: #f0f0f0;
  color: #000;
  font: 15px/20px "Noto Sans", "Open Sans", sans-serif;
}

button {
  margin: 0;
  padding: 0;
  border: 0;
  background: none;
  color: inherit;
  font: inherit;
}

input,
select {
  box-sizing: border-box;
  margin: 0;
  border: 0;
  background: #fff;
  color: inherit;
  font: inherit;
}

.tag-text {
  font: bold 12px "DejaVu Sans", sans-serif;
}

.one-text {
  font: bold 17px "Liberation Sans", sans-serif;
}

.i-text {
  font: italic bold 25px "Liberation Serif", serif;
}

.q-text {
  font: 26px "Liberation Serif", serif;
}

.csw-text {
  font: 13px "DejaVu Sans", sans-serif;
}

.titlebar {
  display: flex;
  align-items: center;
  height: 37px;
  padding-left: 11px;
  background: #fff;
}

.logo {
  width: 18px;
  height: 20px;
}

.title {
  flex: 1;
  padding-left: 6px;
  font: 14px/20px "Open Sans", sans-serif;
}

.controls {
  display: flex;
}

.controls button {
  display: grid;
  place-items: center;
  width: 58px;
  height: 37px;
}

.controls button:last-child {
  margin-right: 2px;
}

.controls svg {
  width: 13px;
  height: 13px;
  fill: none;
  stroke: #000;
}

.menubar {
  display: flex;
  align-items: flex-start;
  gap: 20px;
  height: 28px;
  padding: 3px 0 0 10px;
  box-sizing: border-box;
  background: #fff;
}

.menubar u {
  text-underline-offset: 2px;
}

.row {
  display: flex;
  border-bottom: 1px solid #b8b8b8;
  box-shadow: inset 0 1px #fafafa;
}

.group {
  box-sizing: border-box;
  display: flex;
  padding: 0 2px 0 0;
  border-right: 1px solid #b8b8b8;
  box-shadow: inset 1px 0 #fafafa;
}

.group:last-child {
  border-right: 0;
}

.row-1 .tool {
  padding: 6px 0;
}

.row-2 .tool {
  padding: 7px 0 4px;
}

.row-3 .tool {
  padding: 7px 0 5px;
}

.file {
  width: 308px;
}

.nav {
  width: 697px;
}

.attributes,
.plugins,
.extra {
  flex: 1;
}

.help,
.web {
  flex: none;
  width: 64px;
}

.edit {
  width: 567px;
}

.labels {
  width: 405px;
}

.grip {
  flex: none;
  box-sizing: border-box;
  width: 12px;
  margin: 4px 0;
  border: solid transparent;
  border-width: 0 4px 0 5px;
  background: repeating-linear-gradient(#bdbdbd 0 2px, transparent 2px 5px) padding-box;
}

.group:first-child .grip {
  width: 11px;
}

.tool {
  display: flex;
  align-items: center;
  flex: 1 1 49px;
  max-width: 49px;
}

.tool.menu {
  flex-basis: 64px;
  max-width: 64px;
}

.tool .icon {
  margin-left: 4px;
}

.tool .caret {
  margin-left: 7px;
}

.tool.active {
  margin: 3px 0;
  padding: 2px 0;
  border: 1px solid #99cff5;
  background: #c3ddf3;
}

.tool.active .icon {
  margin-left: 3px;
}

.icon {
  flex: none;
  width: 40px;
  height: 40px;
  overflow: visible;
}

.dim {
  filter: grayscale(1) opacity(0.5);
}

.caret {
  flex: none;
  width: 0;
  height: 0;
  border: 4px solid transparent;
  border-top: 5px solid #6a6a6a;
  border-bottom: 0;
}

.plugins .caret,
.side .caret {
  border-top-color: #111;
}

.more {
  width: 12px;
  margin: 0 1px 0 auto;
}

.more svg {
  width: 11px;
  height: 8px;
  fill: none;
  stroke: #000;
  stroke-width: 2;
}

.body {
  display: flex;
  flex: 1;
}

.side {
  box-sizing: border-box;
  display: flex;
  flex-direction: column;
  width: 69px;
  padding-top: 4px;
  border-right: 2px solid #c4c4c4;
}

.grip-h {
  display: block;
  height: 3px;
  margin: 0 4px 0 5px;
  background: repeating-linear-gradient(90deg, #c4c4c4 0 2px, transparent 2px 5px);
}

.side-tools {
  display: flex;
  flex-direction: column;
  height: 477px;
  margin-top: 4px;
}

.side-tool {
  display: flex;
  align-items: center;
  flex: 1;
  padding-left: 6px;
}

.side-tool .caret {
  margin-left: 8px;
}

.side-rest {
  flex: 1;
  margin-top: 1px;
  padding-top: 5px;
  border-top: 1px solid #b8b8b8;
}

.panel {
  display: flex;
  flex-direction: column;
  width: 401px;
}

.panel-title {
  display: flex;
  align-items: center;
  margin-top: 1px;
  padding: 3px 0 2px 3px;
  border: 1px solid #c4c4c4;
  border-left: 0;
  background: #d9d9d9;
}

.panel-title h2 {
  flex: 1;
  margin: 0;
  font: inherit;
}

.panel-title button {
  display: grid;
  width: 20px;
  place-items: center;
}

.panel-title svg {
  width: 12px;
  height: 12px;
  fill: none;
  stroke: #000;
  stroke-width: 1.6;
}

.panel-tools {
  display: flex;
  height: 42px;
  margin-top: 1px;
  padding-left: 1px;
  border-top: 1px solid #fff;
}

.panel-tools button {
  display: flex;
  align-items: center;
  width: 39px;
  padding-left: 5px;
}

.panel-tools .menu {
  width: 54px;
}

.panel-tools .caret {
  margin-left: 7px;
}

.icon-s {
  flex: none;
  width: 30px;
  height: 30px;
  overflow: visible;
}

.tree {
  flex: 1;
  border: 1px solid #828790;
  background: #fff;
}

.canvas {
  flex: 1;
  min-width: 0;
  margin-left: 5px;
  border: 1px solid #828790;
  border-top-color: #a8bccb;
  background: #fff;
}

.message {
  display: flex;
  align-items: flex-start;
  height: 43px;
  padding-left: 13px;
  border-bottom: 1px solid #b3cfe0;
  background: #e7f5fe;
}

.bubble {
  flex: none;
  width: 28px;
  height: 26px;
  margin-top: 8px;
}

.message-text {
  flex: 1;
  height: 30px;
  margin: 12px 0 0 13px;
  overflow: hidden;
  color: #3f62b5;
}

.message-text p {
  width: 325px;
  margin: 0;
}

.scroller {
  display: flex;
  flex-direction: column;
  width: 21px;
  margin: 6px 7px 0 0;
}

.scroller button {
  display: grid;
  place-items: center;
  height: 18px;
  border: solid #828282;
  border-width: 0 2px 2px 0;
  background: #f0f0f0;
  box-shadow: inset 1px 1px #fff;
}

.up,
.down {
  width: 0;
  height: 0;
  border: 3px solid transparent;
}

.up {
  border-top: 0;
  border-bottom: 4px solid #000;
}

.down {
  border-bottom: 0;
  border-top: 4px solid #000;
}

.progress {
  box-sizing: border-box;
  display: grid;
  width: 357px;
  height: 31px;
  margin-top: 6px;
  border: 1px solid #bcbcbc;
  background: #e6e6e6;
}

.progress > * {
  grid-area: 1 / 1;
}

.chunk {
  background: #06b025;
}

.progress span {
  align-self: center;
  text-align: center;
}

.cancel {
  box-sizing: border-box;
  width: 92px;
  height: 28px;
  margin: 8px 36px 0 8px;
  border: 1px solid #adadad;
  background: #e1e1e1;
}

.dismiss {
  width: 24px;
  height: 22px;
  margin: 9px 25px 0 0;
}

.dismiss svg {
  display: block;
  width: 22px;
  height: 22px;
  margin: 0 auto;
}

.status {
  display: flex;
  align-items: center;
  justify-content: flex-end;
  height: 36px;
  padding-top: 1px;
}

.status button svg {
  display: block;
  width: 20px;
  height: 20px;
}

.coordinate {
  width: 166px;
  height: 27px;
  margin: 0 4px;
  border: 1px solid #7a7a7a;
  text-align: center;
}

.mouse {
  margin-right: 16px;
}

.combo {
  display: flex;
  align-items: center;
  box-sizing: border-box;
  width: 118px;
  height: 27px;
  margin: 0 6px;
  border: 1px solid #7a7a7a;
  background: #fff;
}

.combo select {
  flex: 1;
  min-width: 0;
  padding: 0 0 0 2px;
  appearance: none;
}

.combo svg {
  width: 10px;
  height: 6px;
  margin-right: 5px;
  fill: none;
  stroke: #444;
}

.lock {
  margin-right: 16px;
}

.status .lock svg {
  width: 16px;
}

.spin {
  box-sizing: border-box;
  display: flex;
  height: 27px;
  margin: 0 11px 0 4px;
  border: 1px solid #7a7a7a;
  background: #fff;
}

.spin input {
  flex: 1;
  width: 0;
  padding: 0 0 0 4px;
}

.magnifier {
  width: 89px;
}

.rotation {
  width: 94px;
  margin: 0 8px 0 10px;
}

.steps {
  display: flex;
  flex-direction: column;
  gap: 1px;
  width: 17px;
  padding: 1px;
}

.steps button {
  flex: 1;
  display: grid;
  place-items: center;
  border: 1px solid #b5b5b5;
  background: #f0f0f0;
}

.render {
  display: flex;
  align-items: center;
  gap: 6px;
  margin-right: 22px;
}

.render input {
  display: grid;
  place-items: center;
  width: 17px;
  height: 17px;
  border: 1px solid #333;
  appearance: none;
}

.render input:checked::after {
  content: "";
  width: 10px;
  height: 5px;
  margin-bottom: 3px;
  box-sizing: border-box;
  border: solid #222;
  border-width: 0 0 1px 1px;
  transform: rotate(-45deg);
}

.crs {
  display: flex;
  align-items: center;
  gap: 5px;
  margin-right: 28px;
}

.log {
  margin-right: 29px;
}

.sizegrip {
  align-self: flex-end;
  width: 12px;
  height: 12px;
}
</style>
